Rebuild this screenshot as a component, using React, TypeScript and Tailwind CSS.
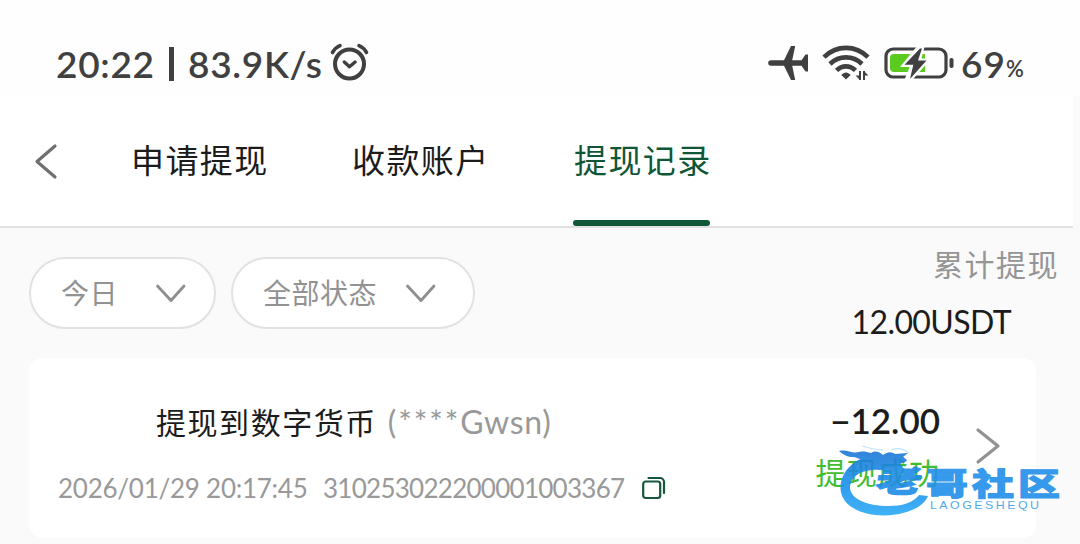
import type { ReactNode } from 'react'

const TABS = [
  { label: '申请提现', className: 'ml-[69px] text-[#1c1c1c]' },
  { label: '收款账户', className: 'ml-[84px] text-[#1c1c1c]' },
  { label: '提现记录', className: 'ml-[84px] pl-[1px] text-[#0f5737]', active: true },
]

function AlarmIcon() {
  return (
    <svg className="h-[40px] w-[42px]" viewBox="0 0 42 40" fill="none" stroke="#404040" strokeWidth="4" strokeLinecap="round" strokeLinejoin="round">
      <circle cx="20.500" cy="22" r="14.500" />
      <path d="M3.500 10.500C5.300 7.300 7.800 5 11 3.700M37.500 10.500C35.700 7.300 33.200 5 30 3.700" strokeWidth="3.600" />
      <path d="M15.300 20l5.200 4.800 5.600-4.800" strokeWidth="3.400" />
    </svg>
  )
}

function PlaneIcon() {
  return (
    <svg className="h-[36px] w-[42px]" viewBox="0 0 42 36" fill="#404040">
      <path d="M4 15.200h13L24 1h4.200l-3 14.200h9.300l4-5.700H41V26.500h-2.500l-4-5.700h-9.300l3 14.200H24L17 20.800H4a2.800 2.800 0 0 1 0-5.600z" />
    </svg>
  )
}

function WifiIcon() {
  return (
    <svg className="h-[38px] w-[48px]" viewBox="0 0 48 38" fill="none" stroke="#404040" strokeWidth="4.600">
      <path d="M2 13.200C14.500.8 33.500.8 46 13.200" />
      <path d="M8 20C17 11.200 31 11.200 40 20" />
      <path d="M14.500 26.400C20 21 28 21 33.500 26.400" />
      <path d="M19.300 31c3-3.400 6.400-3.400 9.400 0L24 35.500z" fill="#404040" stroke="none" />
      <path d="M38 27v9M42 36v-9" strokeWidth="2" />
      <path d="M33.500 31.500H38V36zM46.500 31.500H42V27z" fill="#404040" stroke="none" />
    </svg>
  )
}

function BatteryIcon() {
  return (
    <svg className="h-[36px] w-[70px]" viewBox="0 0 70 36" fill="none">
      <rect x="2" y="4" width="60" height="28" rx="7" stroke="#404040" strokeWidth="3.200" />
      <path d="M10 9h31v18H10a4 4 0 0 1-4-4V13a4 4 0 0 1 4-4z" fill="#5bcb20" />
      <path d="M34 0L16 22h9.500L20 36h7.500L47 13.500h-9.500L41 0z" fill="#fefefe" />
      <path d="M36 3.500L20.500 19.800h8.800L26 34 42.500 15.500H34L38 3.500z" fill="#404040" />
      <rect x="65.500" y="13" width="4" height="10" rx="1.800" fill="#404040" />
    </svg>
  )
}

function Chevron({ className, d }: { className: string; d: string }) {
  return (
    <svg className={className} viewBox="0 0 32 40" fill="none" stroke="currentColor" strokeWidth="3.200" strokeLinecap="round" strokeLinejoin="round">
      <path d={d} />
    </svg>
  )
}

function FilterPill({ className, children }: { className: string; children: ReactNode }) {
  return (
    <button className={`flex h-[72px] items-center rounded-full border-2 border-[#e2e2e2] bg-white pl-[30px] text-[28px] tracking-[0.5px] text-[#929292] ${className}`}>
      <span className="flex-1 text-left">{children}</span>
      <svg className="h-[22px] w-[32px]" viewBox="0 0 32 22" fill="none" stroke="#8e8e8e" strokeWidth="2.800" strokeLinecap="round" strokeLinejoin="round">
        <path d="M3.500 4L17 18.500 30 4" />
      </svg>
    </button>
  )
}

function CopyIcon() {
  return (
    <svg className="h-[24px] w-[24px]" viewBox="0 0 24 24" fill="none" stroke="#17563a" strokeWidth="2.200" strokeLinecap="round">
      <rect x="1.200" y="5.500" width="17" height="16.500" rx="2.500" />
      <path d="M6.500 2H18a4 4 0 0 1 4 4v11" />
    </svg>
  )
}

// 社区水印，浮在卡片右下角
function Watermark() {
  return (
    <div className="absolute left-[836px] top-[442px] h-[76px] w-[230px] opacity-90">
      <svg className="absolute left-0 top-0 h-[76px] w-[100px]" viewBox="0 0 100 76">
        <defs>
          <linearGradient id="wm" x1="0" y1="8" x2="0" y2="74" gradientUnits="userSpaceOnUse">
            <stop offset="0" stopColor="#1c78d6" />
            <stop offset="0.6" stopColor="#1e95ee" />
            <stop offset="1" stopColor="#2cabf5" />
          </linearGradient>
        </defs>
        {/* 龙身 */}
        <path d="M40 13C20 14 5 29 4.500 45c-.5 17 18 28.500 44 28.500C70 73 88 65 92 54l-9-1c-6 8-17 11-31 11C33 64 15 58 14 46c-.5-10 9-17 22-18 9-.8 15 1 20 5 5-1 9-3 12-6l-4-5 7-3-4-4z" fill="url(#wm)" />
        {/* 龙头、龙须 */}
        <path d="M3 9c9-2 12 3 20 1 5-1 8 0 12 1 5-3 8-1 12 2 5-4 9-3 12-1l13-1-5 4 4 3-10 5-14 3-16-1-4-7-9-3c-7 0-10-2-15-6z" fill="url(#wm)" />
        <path d="M26 4c10 3 14 4 21 4M55 8c8-3 13-1 18 3" fill="none" stroke="#5aaeea" strokeWidth="1.300" opacity="0.4" />
      </svg>
      <div className="absolute left-[43px] top-[22px] origin-top -skew-x-6 scale-y-[0.68] text-[45px] font-black leading-[48px] text-[#1f8be6] [-webkit-text-stroke:2px_#1f8be6]">
        老
      </div>
      <div className="absolute left-[90px] top-[28px] origin-top scale-y-[0.74] whitespace-nowrap text-[42px] font-black leading-[36px] tracking-[4px] text-[#228fe9] [-webkit-text-stroke:1.5px_#228fe9]">
        哥社区
      </div>
      <div className="absolute left-[94px] top-[58px] origin-left scale-x-[1.180] whitespace-nowrap font-['Liberation_Sans'] text-[10.500px] leading-[10px] tracking-[2.100px] text-[#3da3e8]">
        LAOGESHEQU
      </div>
    </div>
  )
}

export default function App() {
  return (
    <div className="relative h-[544px] w-[1080px] overflow-hidden bg-[#fafafa] font-['Lato','Noto_Sans_CJK_SC',sans-serif]">
      {/* 状态栏 */}
      <div className="flex h-[96px] items-center whitespace-nowrap bg-[#fefefe] pl-[56px] pt-[31px] text-[37px] font-semibold text-[#404040]">
        <span className="w-[113px] tracking-[0.700px]">20:22</span>
        <span className="h-[34px] w-[5px] bg-[#404040]" />
        <span className="ml-[14px] w-[141px] tracking-[0.700px]">83.9K/s</span>
        <div className="pb-[3px]"><AlarmIcon /></div>
        <div className="ml-[396px] flex items-center pb-[1px]">
          <PlaneIcon />
          <div className="ml-[13px]"><WifiIcon /></div>
          <div className="ml-[14px]"><BatteryIcon /></div>
        </div>
        <span className="ml-[7px] tracking-[1px]">69</span>
        <span className="pt-[9px] text-[22px]">%</span>
      </div>

      {/* 顶部标签 */}
      <div className="flex h-[132px] w-[1073px] border-b-2 border-[#e2e2e2] bg-white pl-[30px]">
        <Chevron className="mt-[45px] h-[40px] w-[32px] text-[#707070]" d="M25 5L7 20.500l18 15.500" />
        {TABS.map((tab) => (
          <div key={tab.label} className={`relative w-[137px] whitespace-nowrap pt-[41px] text-[33px] leading-[47px] tracking-[1.400px] ${tab.className}`}>
            {tab.label}
            {tab.active && <div className="absolute bottom-0 left-0 h-[6px] w-[137px] rounded-full bg-[#0f5737]" />}
          </div>
        ))}
      </div>

      {/* 筛选 + 累计 */}
      <div className="flex h-[130px] pl-[29px] pt-[29px]">
        <FilterPill className="w-[187px] pr-[28px]">今日</FilterPill>
        <FilterPill className="ml-[15px] w-[244px] pr-[37px]">全部状态</FilterPill>
        <div className="ml-auto w-[230px] whitespace-nowrap text-right">
          <div className="-mt-[15px] pr-[21px] text-[30px] leading-[44px] tracking-[1.500px] text-[#959595]">累计提现</div>
          <div className="mt-[16px] pr-[69px] text-[32px] leading-[40px] tracking-[-0.600px] text-[#1c1c1c]">12.00USDT</div>
        </div>
      </div>

      {/* 提现记录卡片 */}
      <div className="ml-[29px] flex h-[180px] w-[1007px] whitespace-nowrap rounded-[14px] bg-white">
        <div className="w-[786px] pl-[29px] pt-[42px]">
          <div className="flex h-[44px] items-center pl-[98px] text-[30px] tracking-[1.550px] text-[#1c1c1c]">
            <span>提现到数字货币</span>
            <span className="ml-[11px] text-[32px] text-[#999999]">
              <span className="tracking-[1.900px]">(****</span>
              <span className="tracking-[0.700px]">Gwsn)</span>
            </span>
          </div>
          <div className="mt-[22px] flex h-[44px] items-center text-[26px] text-[#999999]">
            <span className="w-[265px] tracking-[-0.250px]">2026/01/29 20:17:45</span>
            <span className="w-[319px] tracking-[-0.730px]">310253022200001003367</span>
            <CopyIcon />
          </div>
        </div>
        <div className="w-[126px] pt-[41px] text-right">
          <div className="pr-[1px] text-[35px] font-semibold leading-[42px] text-[#1c1c1c]">−12.00</div>
          <div className="mt-[9px] pr-[1px] text-[30px] leading-[44px] tracking-[1.100px] text-[#42bd32]">提现成功</div>
        </div>
        <Chevron className="ml-[32px] mt-[68px] h-[40px] w-[32px] text-[#929292]" d="M5 4l20 16L5 36" />
      </div>

      <Watermark />
    </div>
  )
}
